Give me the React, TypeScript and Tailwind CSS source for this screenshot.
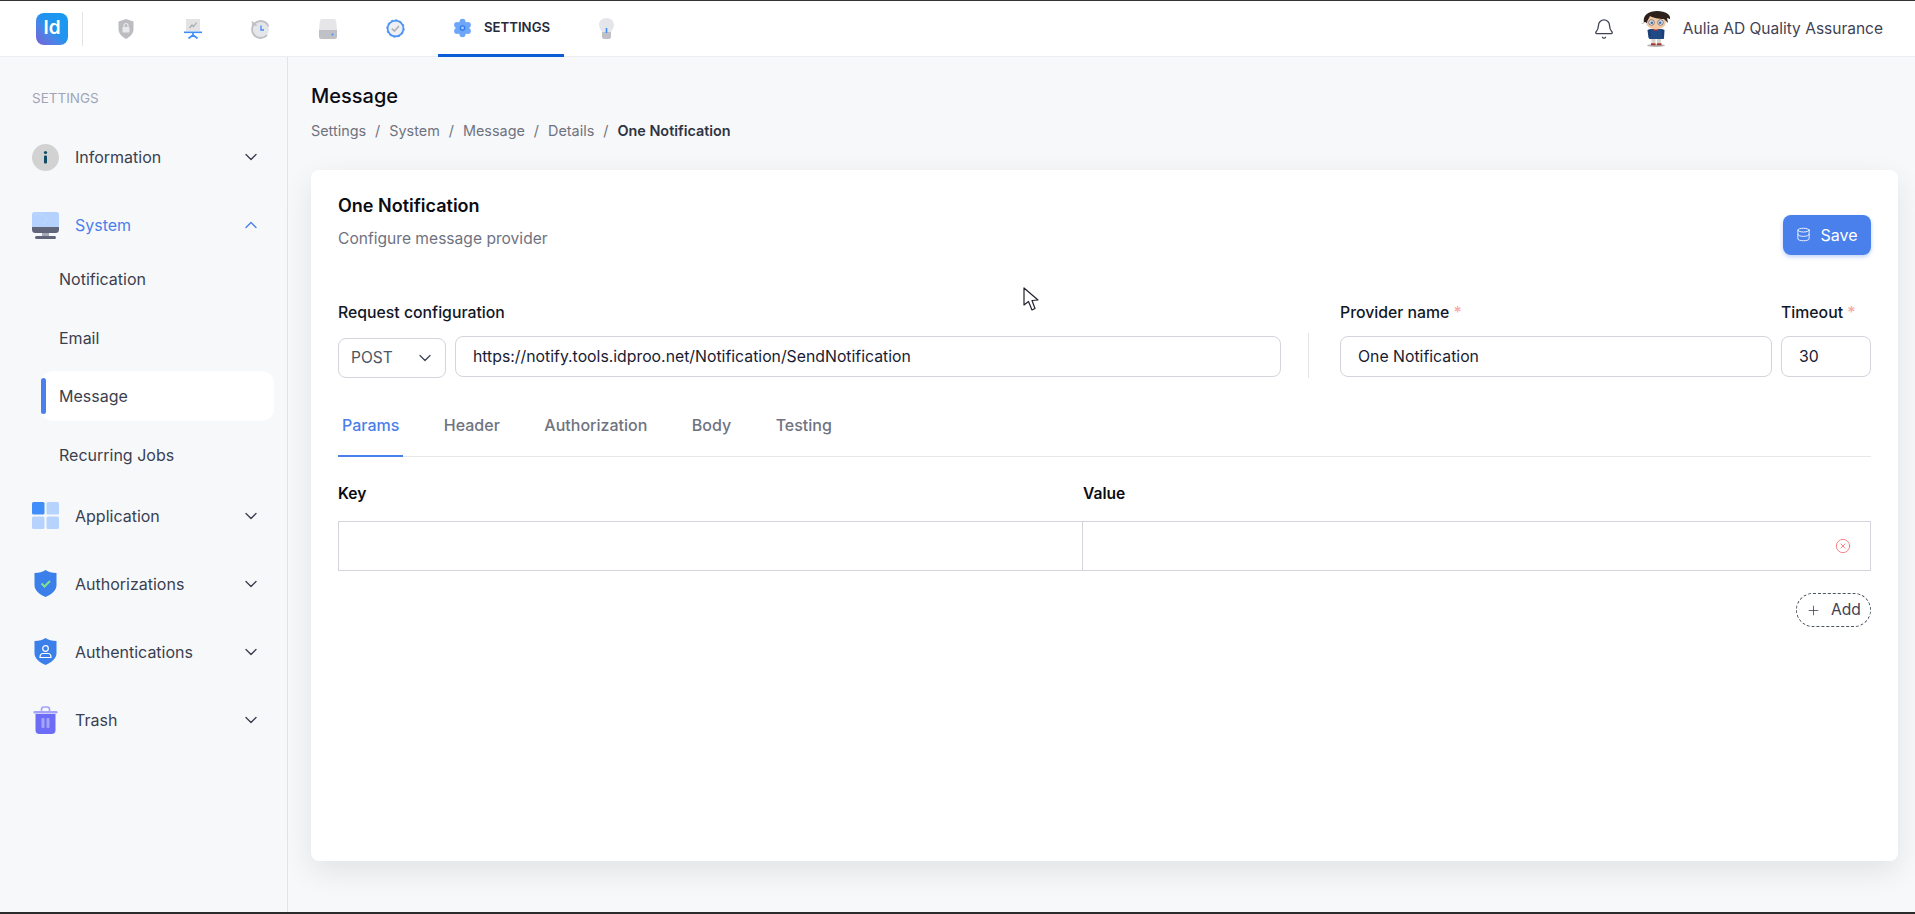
import React from "react";
import { Bell, ChevronDown, ChevronUp, CircleX, Database, Plus } from "lucide-react";

const ShieldIcon = () => (
  <svg width="16" height="20" viewBox="0 0 16 20">
    <path d="M8 0 L15.5 2.5 V10 C15.5 15 11.5 18 8 20 C4.5 18 .5 15 .5 10 V2.5 Z" fill="#bcbdc1" />
    <rect x="4.5" y="8" width="7" height="5.5" rx="1" fill="#e9e9eb" />
    <path d="M6 8 V6.5 a2 2 0 0 1 4 0 V8" stroke="#e9e9eb" strokeWidth="1.2" fill="none" />
  </svg>
);
const PresenterIcon = () => (
  <svg width="18" height="20" viewBox="0 0 18 20">
    <rect x="2" y="0" width="14" height="12" fill="#e3e3e6" />
    <path d="M5.5 9 L8 6 L9.5 7.5 L12.5 3.5" stroke="#a9aaae" strokeWidth="1.2" fill="none" />
    <rect x="0" y="12.5" width="18" height="1.6" fill="#3f8ef7" />
    <path d="M9 14 V17 M9 16 L4.5 19.5 M9 16 L13.5 19.5" stroke="#3f8ef7" strokeWidth="1.7" fill="none" />
  </svg>
);
const HistoryIcon = () => (
  <svg width="19" height="20" viewBox="0 0 19 20">
    <circle cx="9.5" cy="10.5" r="8.5" fill="#e5e6ea" stroke="#bfc0c4" strokeWidth="1.8" strokeDasharray="44 8" strokeDashoffset="-6" />
    <path d="M1 2 L1.5 6.8 L6.2 6.2" fill="#bfc0c4" stroke="#bfc0c4" strokeWidth=".6" />
    <path d="M10 6.5 V11 H13" stroke="#3f8ef7" strokeWidth="1.3" fill="none" />
  </svg>
);
const DiskIcon = () => (
  <svg width="18" height="20" viewBox="0 0 18 20">
    <path d="M3 0 H15 Q17 0 17.3 3 L18 11 H0 L.7 3 Q1 0 3 0 Z" fill="#e6e6e9" />
    <path d="M0 11 H18 V17.5 Q18 20 15.5 20 H2.5 Q0 20 0 17.5 Z" fill="#c0c1c7" />
    <circle cx="13.5" cy="15.5" r="1" fill="#3f8ef7" />
  </svg>
);
const BadgeIcon = () => (
  <svg width="19" height="19" viewBox="0 0 19 19">
    <circle cx="9.5" cy="9.5" r="7.9" fill="#eeeff1" stroke="#4a93f6" strokeWidth="1.7" />
    <circle cx="9.5" cy="9.5" r="8.7" fill="none" stroke="#4a93f6" strokeWidth="1" strokeDasharray="2.4 2.1" />
    <path d="M5.8 9.6 L8.4 12 L13 7" stroke="#b0b1b6" strokeWidth="1.7" fill="none" />
  </svg>
);
const GearIcon = () => (
  <svg width="19" height="20" viewBox="0 0 24 24">
    <circle cx="12" cy="12" r="8.5" fill="#6ea6f8" />
    <circle cx="12" cy="4.2" r="3.8" fill="#6ea6f8" />
    <circle cx="12" cy="19.8" r="3.8" fill="#6ea6f8" />
    <circle cx="5.2" cy="8.1" r="3.8" fill="#6ea6f8" />
    <circle cx="18.8" cy="8.1" r="3.8" fill="#6ea6f8" />
    <circle cx="5.2" cy="15.9" r="3.8" fill="#6ea6f8" />
    <circle cx="18.8" cy="15.9" r="3.8" fill="#6ea6f8" />
    <circle cx="12" cy="12" r="3.6" fill="#2f7cf0" />
    <circle cx="12" cy="12" r="1.8" fill="#a9cafb" />
  </svg>
);
const BulbIcon = () => (
  <svg width="15" height="21" viewBox="0 0 15 21">
    <path d="M7.5 0 C3 0 0 3 0 7 C0 10 2 11.5 3 14 H12 C13 11.5 15 10 15 7 C15 3 12 0 7.5 0 Z" fill="#e5e6e9" />
    <path d="M3 14 H12 V18.5 Q12 21 9.5 21 H5.5 Q3 21 3 18.5 Z" fill="#c0c1c7" />
    <rect x="6.7" y="10" width="1.6" height="5" fill="#3f8ef7" />
  </svg>
);

const Avatar = () => (
  <svg width="32" height="36" viewBox="0 0 32 36">
    <ellipse cx="16" cy="34.5" rx="9" ry="1.4" fill="#b4b4b4" />
    <rect x="11.5" y="27" width="4" height="6" fill="#d8d4cc" />
    <rect x="17" y="27" width="4" height="6" fill="#d8d4cc" />
    <rect x="11" y="32.3" width="4.5" height="2" fill="#a33" />
    <rect x="17" y="32.3" width="4.5" height="2" fill="#a33" />
    <path d="M10 18 H22 L24 28 H9 Z" fill="#1f4a86" />
    <path d="M7.5 19 L10 18 L11 26 L8.5 27 Z M24.5 19 L22 18 L21.5 26 L24 27 Z" fill="#1b3f75" />
    <rect x="14" y="18" width="4" height="1.6" fill="#c8282c" />
    <ellipse cx="16" cy="11" rx="10" ry="7.5" fill="#f3c9a4" />
    <path d="M4 12 C2 4 9 0 17 0 C26 0 31 4 30 8 L27 7 L28 12 L24 8 C19 8 13 7 10 5 C9 8 7 9 7 12 L5 11 L1 13 Z" fill="#2e211c" />
    <circle cx="11.5" cy="11.5" r="2.8" fill="#dfe6ec" stroke="#5a5a66" strokeWidth=".7" />
    <circle cx="20.5" cy="11.5" r="2.8" fill="#dfe6ec" stroke="#5a5a66" strokeWidth=".7" />
    <circle cx="11.8" cy="11.8" r="1.3" fill="#3d6fa8" />
    <circle cx="20.2" cy="11.8" r="1.3" fill="#3d6fa8" />
  </svg>
);

const InfoIcon = () => (
  <svg width="27" height="27" viewBox="0 0 27 27">
    <circle cx="13.5" cy="13.5" r="13.5" fill="#d2d2d2" />
    <circle cx="13.5" cy="8.5" r="1.6" fill="#0f4a66" />
    <rect x="12" y="11.5" width="3" height="8" rx="1" fill="#0f4a66" />
  </svg>
);
const SystemIcon = () => (
  <svg width="27" height="27" viewBox="0 0 27 27">
    <path d="M2.5 0 H24.5 Q27 0 27 2.5 V15 H0 V2.5 Q0 0 2.5 0 Z" fill="#b4d2fd" />
    <path d="M2 2 H11 L15 7 L11 12" stroke="#c5dcfd" strokeWidth=".6" fill="none" />
    <path d="M0 15 H27 V17.5 Q27 21 23.5 21 H3.5 Q0 21 0 17.5 Z" fill="#60657a" />
    <rect x="10" y="21" width="7" height="3" fill="#a6a9b5" />
    <rect x="3" y="24" width="21" height="3" rx="1.5" fill="#60657a" />
  </svg>
);
const AppsIcon = () => (
  <svg width="27" height="27" viewBox="0 0 27 27">
    <rect width="12.5" height="12.5" rx="1.5" fill="#3f8ef9" />
    <rect x="14.5" width="12.5" height="12.5" rx="1.5" fill="#b5d3fd" />
    <rect y="14.5" width="12.5" height="12.5" rx="1.5" fill="#b5d3fd" />
    <rect x="14.5" y="14.5" width="12.5" height="12.5" rx="1.5" fill="#b5d3fd" />
  </svg>
);
const ShieldPath = "M13.5 0 C16 2 20 3 24.5 3 V15 C24.5 21 19 24.5 13.5 27 C8 24.5 2.5 21 2.5 15 V3 C7 3 11 2 13.5 0 Z";
const AuthzIcon = () => (
  <svg width="27" height="27" viewBox="0 0 27 27">
    <path d={ShieldPath} fill="#3b7fea" />
    <path d="M9.5 13.5 L12.5 16.5 L18 11" stroke="#7fe28c" strokeWidth="2" fill="none" />
  </svg>
);
const AuthnIcon = () => (
  <svg width="27" height="27" viewBox="0 0 27 27">
    <path d={ShieldPath} fill="#3b7fea" />
    <circle cx="13.5" cy="10.5" r="2.8" fill="none" stroke="#fff" strokeWidth="1.2" />
    <path d="M8 19.5 Q8 15.5 11 15.5 H16 Q19 15.5 19 19.5 Z" fill="none" stroke="#fff" strokeWidth="1.2" strokeLinejoin="round" />
  </svg>
);
const TrashIcon = () => (
  <svg width="27" height="28" viewBox="0 0 27 28">
    <path d="M9.5 5 V3.5 Q9.5 1 12 1 H15 Q17.5 1 17.5 3.5 V5" fill="none" stroke="#a5a3f8" strokeWidth="1.6" />
    <rect x="1.5" y="5" width="24" height="2.4" rx="1.2" fill="#a5a3f8" />
    <path d="M3.5 8 H23.5 V24 Q23.5 28 19.5 28 H7.5 Q3.5 28 3.5 24 Z" fill="#6c6cf7" />
    <rect x="9.5" y="12" width="3" height="10" rx="1" fill="#a5a3f8" />
    <rect x="14.5" y="12" width="3" height="10" rx="1" fill="#a5a3f8" />
  </svg>
);

function MainItem({ icon, label, open }: { icon: React.ReactNode; label: string; open?: boolean }) {
  return (
    <div className="flex h-[44px] items-center">
      <div className="flex w-[27px] shrink-0 items-center justify-center">{icon}</div>
      <span className={`ml-4 flex-1 text-[16px] ${open ? "text-[#4a80ec]" : "text-[#3a3f51]"}`}>{label}</span>
      {open ? (
        <ChevronUp size={20} strokeWidth={1.6} className="text-[#4a80ec]" />
      ) : (
        <ChevronDown size={20} strokeWidth={1.6} className="text-[#3a3f51]" />
      )}
    </div>
  );
}

function SubItem({ label, active }: { label: string; active?: boolean }) {
  return active ? (
    <div className="flex h-[50px] items-center rounded-xl bg-white">
      <div className="h-[36px] w-[5px] rounded-sm bg-[#4a80ec]" />
      <span className="ml-[13px] text-[16px] text-[#3a3f51]">{label}</span>
    </div>
  ) : (
    <div className="flex h-[50px] items-center pl-[18px] text-[16px] text-[#3a3f51]">{label}</div>
  );
}

const inputBox = "flex h-[41px] items-center rounded-lg border border-[#d3d4dc] bg-white text-[15.8px] text-[#181c32]";

export default function App() {
  return (
    <div
      className="relative flex h-[914px] w-full flex-col overflow-hidden border-t border-b-2 border-t-[#333333] border-b-[#2b2b2b] bg-[#f7f8fa]"
      style={{ fontFamily: "Inter, 'Noto Sans', sans-serif" }}
    >
      {/* Top bar */}
      <header className="flex h-[56px] shrink-0 items-stretch border-b border-[#eceef1] bg-white">
        <div className="ml-[36px] flex items-center">
          <div className="flex h-[32px] w-[32px] items-center justify-center rounded-lg bg-gradient-to-bl from-[#149bf3] via-[#2392ee] to-[#7061d6] text-[19px] font-semibold text-white">
            Id
          </div>
          <div className="ml-[14px] h-[34px] w-px bg-[#e3e4e8]" />
        </div>
        <div className="ml-[35px] flex items-center"><ShieldIcon /></div>
        <div className="ml-[50px] flex items-center"><PresenterIcon /></div>
        <div className="ml-[49px] flex items-center"><HistoryIcon /></div>
        <div className="ml-[49px] flex items-center"><DiskIcon /></div>
        <div className="ml-[49px] flex items-center"><BadgeIcon /></div>
        <div className="-mb-px ml-[33px] flex w-[126px] items-center border-b-[3px] border-[#0b5ed7] pl-[15px]">
          <GearIcon />
          <span className="ml-3 mt-px text-[13.2px] font-semibold text-[#262a3b]">SETTINGS</span>
        </div>
        <div className="ml-[35px] flex items-center"><BulbIcon /></div>
        <div className="flex-1" />
        <div className="flex items-center text-[#3f4254]">
          <Bell size={22} strokeWidth={1.4} />
        </div>
        <div className="ml-[25px] flex items-center"><Avatar /></div>
        <div className="ml-[11px] mr-[32px] flex items-center text-[15.5px] text-[#3f4254]">Aulia AD Quality Assurance</div>
      </header>

      <div className="flex min-h-0 flex-1">
        {/* Sidebar */}
        <aside className="w-[288px] shrink-0 border-r border-[#e3e4e8] pl-[32px] pr-[26px] pt-[31px]">
          <div className="h-[20px] text-[13.5px] leading-[20px] text-[#a1a5b7]">SETTINGS</div>
          <div className="mt-[27px] flex flex-col gap-[24px]">
            <MainItem icon={<InfoIcon />} label="Information" />
            <MainItem icon={<SystemIcon />} label="System" open />
          </div>
          <div className="-mr-[13px] ml-[9px] mt-[7px] flex flex-col gap-[8.6px]">
            <SubItem label="Notification" />
            <SubItem label="Email" />
            <SubItem label="Message" active />
            <SubItem label="Recurring Jobs" />
          </div>
          <div className="mt-[14px] flex flex-col gap-[24px]">
            <MainItem icon={<AppsIcon />} label="Application" />
            <MainItem icon={<AuthzIcon />} label="Authorizations" />
            <MainItem icon={<AuthnIcon />} label="Authentications" />
            <MainItem icon={<TrashIcon />} label="Trash" />
          </div>
        </aside>

        {/* Main */}
        <main className="min-w-0 flex-1 pl-[23px] pr-[17px] pt-[25px]">
          <h1 className="text-[20px] font-medium leading-7 text-[#0b0b12]">Message</h1>
          <nav className="mt-[11px] flex items-center text-[14.4px] leading-5 text-[#6f7380]">
            <span>Settings</span>
            <span className="mx-[9px]">/</span>
            <span>System</span>
            <span className="mx-[9px]">/</span>
            <span>Message</span>
            <span className="mx-[9px]">/</span>
            <span>Details</span>
            <span className="mx-[9px]">/</span>
            <span className="font-semibold text-[#2f3342]">One Notification</span>
          </nav>

          <section className="mt-[29px] flex h-[691px] flex-col rounded-lg bg-white px-[27px] pt-[22px] shadow-[0_10px_30px_rgba(0,0,0,0.09)]">
            <div className="flex justify-between">
              <div className="pb-[6px]">
                <h2 className="text-[18px] font-semibold leading-7 text-[#0b0b12]">One Notification</h2>
                <p className="mt-[9px] text-[15.6px] leading-5 text-[#6f7380]">Configure message provider</p>
              </div>
              <button className="flex h-[40px] w-[88px] items-center justify-center gap-[9px] self-end rounded-lg bg-[#4a80ec] pb-px text-[16px] text-white shadow-[0_2px_4px_rgba(74,128,236,0.35)]">
                <Database size={15} strokeWidth={1.4} />
                Save
              </button>
            </div>

            <div className="mt-[48px] flex">
              <div className="w-[943px] shrink-0">
                <div className="text-[15.8px] font-medium leading-5 text-[#111827]">Request configuration</div>
                <div className="mt-[13px] flex gap-[9px]">
                  <div className="mt-[2px] flex h-[40px] w-[108px] shrink-0 items-center justify-between rounded-lg border border-[#d3d4dc] bg-white pl-[12px] pr-[10px] text-[15.5px] text-[#4b5563]">
                    POST
                    <ChevronDown size={20} strokeWidth={1.5} className="text-[#3f4254]" />
                  </div>
                  <div className={`${inputBox} flex-1 pl-[17px]`}>https://notify.tools.idproo.net/Notification/SendNotification</div>
                </div>
              </div>
              <div className="ml-[27px] h-[45px] w-px self-end bg-[#e3e4e8]" />
              <div className="ml-[31px] w-[432px] shrink-0">
                <div className="text-[15.8px] font-medium leading-5 text-[#111827]">
                  Provider name <span className="text-[#f9a8a8]">*</span>
                </div>
                <div className={`${inputBox} mt-[13px] pl-[17px]`}>One Notification</div>
              </div>
              <div className="ml-[9px] w-[90px] shrink-0">
                <div className="text-[15.8px] font-medium leading-5 text-[#111827]">
                  Timeout <span className="text-[#f9a8a8]">*</span>
                </div>
                <div className={`${inputBox} mt-[13px] pl-[17px]`}>30</div>
              </div>
            </div>

            <div className="mt-[18px] flex gap-[36.5px] border-b border-[#e5e7eb] text-[16px] font-medium leading-5">
              <div className="-mb-px border-b-2 border-[#4a80ec] px-1 pb-[20px] pt-[19px] text-[#4a80ec]">Params</div>
              <div className="px-1 pb-[21px] pt-[19px] text-[#6f7380]">Header</div>
              <div className="px-1 pb-[21px] pt-[19px] text-[#6f7380]">Authorization</div>
              <div className="px-1 pb-[21px] pt-[19px] text-[#6f7380]">Body</div>
              <div className="px-1 pb-[21px] pt-[19px] text-[#6f7380]">Testing</div>
            </div>

            <div className="mt-[27px] flex text-[15.6px] font-semibold leading-5 text-[#0b0b12]">
              <div className="w-[745px]">Key</div>
              <div className="flex-1">Value</div>
            </div>
            <div className="mt-[17px] flex h-[50px] border border-[#d3d4dc]">
              <div className="w-[744px] border-r border-[#d3d4dc]" />
              <div className="flex flex-1 items-center justify-end pr-[19px]">
                <CircleX size={16} strokeWidth={1.3} className="text-[#f87171]" />
              </div>
            </div>
            <div className="mt-[22px] flex justify-end">
              <button className="flex h-[34px] w-[75px] items-center justify-center gap-[10px] rounded-full border border-dashed border-[#4b5563] text-[15.6px] text-[#3f4254]">
                <Plus size={15} strokeWidth={1.3} />
                Add
              </button>
            </div>
          </section>
        </main>
      </div>

      {/* Mouse pointer captured in the screenshot */}
      <svg className="absolute left-[1023px] top-[286px]" width="16" height="25" viewBox="0 0 16 25">
        <path d="M1 1 V18 L5.5 14.5 L9 23 L12 21.5 L9 13.5 L15 13 Z" fill="#fff" stroke="#22222e" strokeWidth="1.2" strokeLinejoin="round" />
      </svg>
    </div>
  );
}
